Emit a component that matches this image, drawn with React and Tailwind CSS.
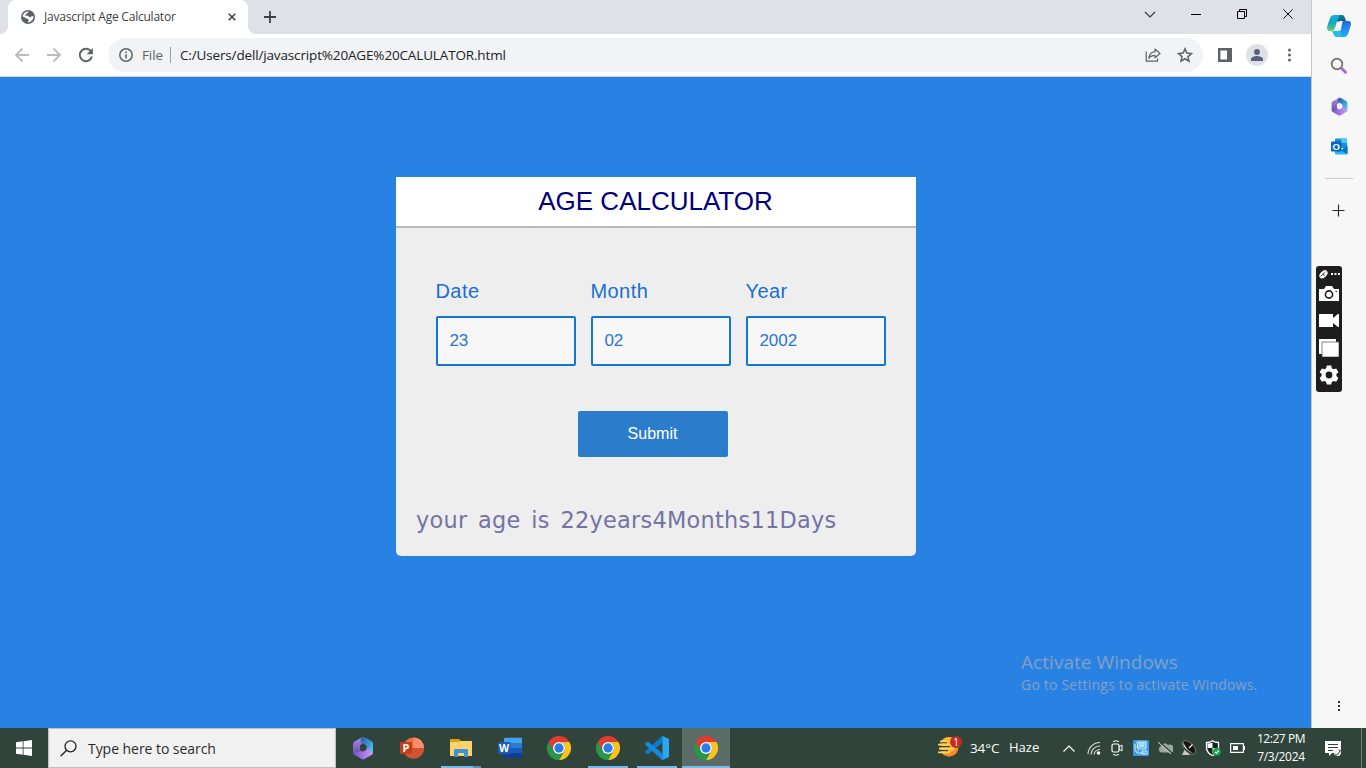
import React from "react";

const segoe = "font-['Open_Sans','Noto_Sans',sans-serif]";
const arial = "font-['Liberation_Sans',Arial,sans-serif]";

function Icon({ size = 16, w, h, box = "0 0 24 24", className = "", children }) {
  return (
    <svg width={w || size} height={h || size} viewBox={box} fill="none" className={"block shrink-0 " + className}>
      {children}
    </svg>
  );
}

/* ---------- browser ---------- */

function TabStrip() {
  return (
    <div className="flex h-[34px] shrink-0 bg-[#dee1e6]">
      <div className="flex w-2 items-end bg-white">
        <div className="h-full w-2 rounded-br-lg bg-[#dee1e6]" />
      </div>
      <div className="w-60 bg-[#dee1e6]">
        <div className="flex h-full items-center rounded-t-lg bg-white pl-[13px] pr-3">
          <Icon size={14} box="0 0 14 14">
            <circle cx="7" cy="7" r="7" fill="#5f6368" />
            <path d="M7.600 1.400c-.2 1-.3 1.300-1.300 1.400-.8.1-.9.900-.6 1.500-.9.2-1.700.5-1.500 1.500h2.600c1 0 .8 1.500 2 1.600 1.100.1.8-1.100 1.900-1.100h1.900C12.300 9.700 10 12.400 6.900 12.500v-1.200c1.200-.2 1.300-1.600.4-2.100-.8-.5-1.700-.2-2.700-1C3.500 7.300 2.400 6.500 1.500 6.600 1.700 3.800 4.300 1.200 7.600 1.400z" fill="#fff" />
          </Icon>
          <span className={segoe + " ml-[9px] flex-1 whitespace-nowrap text-[12px] leading-4 tracking-[-0.22px] text-[#3c4043]"}>
            Javascript Age Calculator
          </span>
          <Icon size={8} box="0 0 9 9">
            <path d="M.8.8l7.400 7.400M8.200.8L.8 8.200" stroke="#3c4043" strokeWidth="1.700" />
          </Icon>
        </div>
      </div>
      <div className="flex w-2 bg-white">
        <div className="h-full w-2 rounded-bl-lg bg-[#dee1e6]" />
      </div>
      <div className="flex flex-1 items-center pl-2">
        <Icon size={12} box="0 0 12 12">
          <path d="M6 0v12M0 6h12" stroke="#3c4043" strokeWidth="1.800" />
        </Icon>
      </div>
      <div className="flex h-7 text-black">
        <div className="flex w-[46px] items-center justify-center">
          <Icon w={12} h={7} box="0 0 12 7"><path d="M1 1l5 5 5-5" stroke="#333" strokeWidth="1.100" /></Icon>
        </div>
        <div className="flex w-[46px] items-center justify-center">
          <div className="h-px w-2.5 bg-black" />
        </div>
        <div className="flex w-[46px] items-center justify-center">
          <Icon size={10} box="0 0 10 10">
            <path d="M.5 2.500h7v7h-7zM2.500 2.500v-2h7v7h-2" stroke="#000" />
          </Icon>
        </div>
        <div className="flex w-[46px] items-center justify-center">
          <Icon size={10} box="0 0 11 11"><path d="M.5.5l10 10M10.500.5l-10 10" stroke="#111" strokeWidth="1.100" /></Icon>
        </div>
      </div>
    </div>
  );
}

function Toolbar() {
  return (
    <div className="flex h-[43px] shrink-0 items-center border-b border-[#d5d8db] bg-white pl-[14px]">
      <Icon size={16} box="0 0 16 16" className="mr-4">
        <path d="M15 8H2M8.500 1.500L2 8l6.500 6.500" stroke="#babcbe" strokeWidth="1.800" />
      </Icon>
      <Icon size={16} box="0 0 16 16" className="mr-4">
        <path d="M1 8h13M7.500 1.500L14 8l-6.500 6.500" stroke="#babcbe" strokeWidth="1.800" />
      </Icon>
      <Icon size={16} box="0 0 16 16">
        <path d="M13.200 4.500A6.200 6.200 0 1 0 14 9.600" stroke="#5f6368" strokeWidth="2" />
        <path d="M14.900 1v6.300H8.600z" fill="#5f6368" />
      </Icon>
      <div className={segoe + " ml-[14px] flex h-[34px] w-[1095px] items-center rounded-full bg-[#f1f3f4] pl-[11px] pr-2.5 leading-5"}>
        <Icon size={14} box="0 0 14 14">
          <circle cx="7" cy="7" r="6.200" stroke="#5f6368" strokeWidth="1.500" />
          <path d="M7 6.200v4.300M7 3.500v1.600" stroke="#5f6368" strokeWidth="1.600" />
        </Icon>
        <span className="ml-[9px] w-[28px] text-[13.5px] tracking-[-0.1px] text-[#5f6368]">File</span>
        <div className="h-4 w-px bg-[#9aa0a6]" />
        <span className="ml-[9px] flex-1 whitespace-nowrap text-[13.5px] tracking-[-0.15px] text-[#202124]">
          C:/Users/dell/javascript%20AGE%20CALULATOR.html
        </span>
        <Icon size={16} box="0 0 16 16" className="mr-4">
          <path d="M1.200 4.500v9.700h11.300v-2.700" stroke="#5f6368" strokeWidth="1.200" />
          <path d="M10 2l5 4.500-5 4.300V8.400C7.400 8.400 5.200 9.200 3.800 11.400 4.200 7.500 6.500 5 10 4.600z" stroke="#5f6368" strokeWidth="1.200" strokeLinejoin="round" />
        </Icon>
        <Icon size={16} box="0 0 24 24">
          <path d="M12 2.800l2.800 6.400 6.900.6-5.200 4.600 1.500 6.800-6-3.600-6 3.600 1.500-6.800-5.200-4.600 6.900-.6z" stroke="#5f6368" strokeWidth="2.300" />
        </Icon>
      </div>
      <Icon size={14} box="0 0 14 14" className="ml-[15px]">
        <path d="M1.200 1.200h11.600v11.600H1.200z" stroke="#5f6368" strokeWidth="2.400" />
        <path d="M9 0h5v14H9z" fill="#5f6368" />
      </Icon>
      <div className="ml-[14px] flex h-[22px] w-[22px] items-center justify-center rounded-full bg-[#dee1e6]">
        <Icon size={12} box="0 0 12 12">
          <circle cx="6" cy="3" r="2.900" fill="#55617a" />
          <path d="M0 12V10c0-2 4-3 6-3s6 1 6 3v2z" fill="#55617a" />
        </Icon>
      </div>
      <Icon w={4} h={14} box="0 0 4 14" className="ml-[19px]">
        <circle cx="2.500" cy="2" r="1.500" fill="#5f6368" />
        <circle cx="2.500" cy="7" r="1.500" fill="#5f6368" />
        <circle cx="2.500" cy="12" r="1.500" fill="#5f6368" />
      </Icon>
    </div>
  );
}

function Field({ label, value }) {
  return (
    <label className="block w-[140px]">
      <span className="ml-[-0.5px] block h-[35px] text-[20px] leading-5 tracking-[0.42px] text-[#1a6fd0]">{label}</span>
      <input
        readOnly
        defaultValue={value}
        className="block h-[50px] w-full rounded-[2px] border-2 border-[#1277d3] bg-[#f7f7f7] pb-0 pl-[11.4px] text-[17px] text-[#2a75cf] outline-none"
      />
    </label>
  );
}

function Page() {
  return (
    <div className={arial + " relative flex flex-1 justify-center bg-[#2882e4] pt-[100px]"}>
      <div className="ml-px h-[379px] w-[520px] overflow-hidden rounded-b-[5px] bg-[#eee]">
        <div className="h-[51px] border-b-2 border-[#b8b8b8] bg-white pr-px text-center text-[26px] leading-[48px] text-[#00007b]">
          AGE CALCULATOR
        </div>
        <div className="flex gap-[15px] pl-10 pt-[53px]">
          <Field label="Date" value="23" />
          <Field label="Month" value="02" />
          <Field label="Year" value="2002" />
        </div>
        <button className="ml-[182px] mt-[45px] block h-[46px] w-[150px] rounded-[2px] bg-[#2b7dcc] pr-px text-[16px] text-white">
          Submit
        </button>
        <p className="ml-5 mt-[47px] whitespace-nowrap font-['DejaVu_Sans',Verdana,sans-serif] text-[22.4px] leading-8 tracking-[0.27px] text-[#7373a5] [word-spacing:3.3px]">
          your age is 22years4Months11Days
        </p>
      </div>
      <div className={segoe + " absolute bottom-[33px] left-[1021px] whitespace-nowrap text-[#84a0c4]"}>
        <div className="text-[19px] leading-6 tracking-[0.05px]">Activate Windows</div>
        <div className="text-[14px] leading-[21px] tracking-[0.2px]">Go to Settings to activate Windows.</div>
      </div>
    </div>
  );
}

/* ---------- side bar ---------- */

function M365({ size }) {
  return (
    <Icon size={size} box="0 0 24 24">
      <defs>
        <linearGradient id="m1" x1="0" y1="0" x2="0" y2="1"><stop stopColor="#b58af0" /><stop offset="1" stopColor="#5c49a8" /></linearGradient>
        <linearGradient id="m2" x1="0" y1="0" x2="1" y2="1"><stop stopColor="#2754a8" /><stop offset="1" stopColor="#54d0f5" /></linearGradient>
        <linearGradient id="m3" x1="0" y1="0" x2="1" y2="0"><stop stopColor="#7250c8" /><stop offset="1" stopColor="#d59af5" /></linearGradient>
      </defs>
      <path d="M12 .8L3.500 5.500Q2 6.300 2 8v9l7 3 3-3-3-3V9.500L12 7z" fill="url(#m1)" />
      <path d="M10 2L11 1.300q1.500-.8 3 0l6.500 3.800q1.500.8 1.500 2.500v9.500l-6.500-3.100V9.500L9.500 6z" fill="url(#m2)" />
      <path d="M2 17l8-2 5.500-3 6.500 5q0 1-1.500 2l-7 4.100q-1.500.8-3 0L3.500 18.800Q2.200 18 2 17z" fill="url(#m3)" />
      <path d="M9 9.800l3.700-2 2.800 2.400v3.600l-3.900 2-2.600-2z" fill={size > 20 ? "#30443c" : "#f7f7f7"} />
    </Icon>
  );
}

function Copilot() {
  return (
    <Icon size={24} box="0 0 24 24">
      <defs>
        <linearGradient id="c1" x1="0" y1="0" x2="0" y2="1"><stop stopColor="#12aee5" /><stop offset=".5" stopColor="#16a6bd" /><stop offset="1" stopColor="#63d17e" /></linearGradient>
        <linearGradient id="c2" x1="0" y1="0" x2="0" y2="1"><stop stopColor="#2466df" /><stop offset="1" stopColor="#20b1f5" /></linearGradient>
        <linearGradient id="c3" x1="0" y1="0" x2="1" y2="1"><stop stopColor="#0799c5" /><stop offset="1" stopColor="#0a5770" /></linearGradient>
      </defs>
      <path d="M6 1h9q2 0 2.600 2L19 7h-5l-3 1z" fill="url(#c3)" />
      <path d="M8 1h5q-1 0-2 3L8 14q-.8 3-3 3H2.500Q-.5 17 .3 12L3 4q1-3 5-3z" fill="url(#c1)" />
      <path d="M5 17h5l4-1-1 4q-.5 2-2 3H9.500Q7.500 23 7 21z" fill="#1ebcef" />
      <path d="M16 7h5.500q3 0 2.300 4L21 20q-1 3-4 3h-6q1 0 2-3l2-10q.5-3 1-3z" fill="url(#c2)" />
      <path d="M11.500 8q1-1 4-1-1 1-1.500 3l-1.500 6Q12 17 8 17q.8-1 1.200-2.500z" fill="#f7f7f7" />
    </Icon>
  );
}

function Recorder() {
  return (
    <div className="ml-1 mt-[49px] flex h-[126px] w-[26px] flex-col items-center self-start rounded-[3px] bg-[#1d1d1d] pt-1">
      <Icon w={22} h={9} box="0 0 22 9">
        <ellipse cx="5.500" cy="4.300" rx="4.800" ry="3.100" transform="rotate(-45 5.500 4.300)" fill="#fff" />
        <path d="M2.500 6.500l5-4.500M5 3.500l1.500 2.500" stroke="#1d1d1d" strokeWidth=".8" />
        <path d="M13 4h2M16.500 4h2M20 4h2" stroke="#fff" strokeWidth="2" />
      </Icon>
      <Icon w={20} h={16} box="0 0 20 16" className="mt-[7px]">
        <path d="M0 3h5l2-3h6l2 3h5v12H0z" fill="#fff" />
        <circle cx="10" cy="8.500" r="3.600" stroke="#1d1d1d" strokeWidth="1.600" />
        <path d="M16.500 5.500h1.500" stroke="#1d1d1d" />
      </Icon>
      <Icon w={20} h={14} box="0 0 20 14" className="mt-[12px]">
        <path d="M0 0h14v4l5-4h1v13h-1l-5-4v4H0z" fill="#fff" />
      </Icon>
      <Icon w={20} h={18} box="0 0 20 18" className="mt-[11px]">
        <path d="M0 0h17v15H0z" fill="#fff" />
        <path d="M3 3h17v15H3z" fill="#fff" stroke="#666" strokeWidth=".8" />
        <path d="M0 15h2.500v3H0z" fill="#1d1d1d" />
      </Icon>
      <Icon size={20} box="0 0 20 20" className="mt-2">
        <path d="M7.800.5h4.400l.6 2.700 1.700 1L17.200 3.400l2.200 3.800-2 1.900v1.900l2 1.900-2.200 3.800-2.700-.8-1.700 1-.6 2.700H7.800l-.6-2.700-1.700-1-2.700.8-2.200-3.800 2-1.900V9.100l-2-1.900 2.200-3.800 2.700.8 1.700-1z" fill="#fff" />
        <circle cx="10" cy="10" r="3.400" fill="#1d1d1d" />
      </Icon>
    </div>
  );
}

function SideBar() {
  return (
    <div className="flex w-[55px] shrink-0 flex-col items-center border-l border-[#c4c6c9] bg-[#f7f7f7]">
      <div className="flex h-[46px] items-end pb-2 pr-px"><Copilot /></div>
      <div className="flex h-10 items-center pr-px">
        <Icon size={18} box="0 0 18 18">
          <path d="M11 11l2 2" stroke="#777" strokeWidth="1.800" />
          <path d="M12.500 12.200l3 3" stroke="#a36ad6" strokeWidth="3" strokeLinecap="round" />
          <circle cx="7" cy="7" r="5.300" stroke="#7b7b7b" strokeWidth="1.900" />
        </Icon>
      </div>
      <div className="flex h-10 items-center pl-px pt-px"><M365 size={19} /></div>
      <div className="flex h-10 items-center pl-px pt-px">
        <Icon w={17} h={17} box="0 0 17 17">
          <path d="M5 .5h10q1 0 1 1V10H4V1.500q0-1 1-1z" fill="#1390df" />
          <path d="M10 .5h5q1 0 1 1V5h-6z" fill="#50c8f5" />
          <path d="M4 9l6 3 6.500-4.500V15.500q0 1-1 1H5q-1 0-1-1z" fill="#28b6f0" />
          <path d="M16.500 7.500L10 12.500l6.500 3.500z" fill="#1470bd" />
          <rect x="0" y="3.500" width="10.500" height="10" rx="1" fill="#0869b9" />
          <text x="5.250" y="12" textAnchor="middle" fontSize="9.500" fontWeight="700" fontFamily="Liberation Sans, sans-serif" fill="#fff">O</text>
        </Icon>
      </div>
      <div className="mt-3 h-px w-7 bg-[#c9c9c9]" />
      <Icon size={13} box="0 0 13 13" className="mr-px mt-[25px]">
        <path d="M6.500.5v12M.5 6.500h12" stroke="#222" strokeWidth="1.100" />
      </Icon>
      <Recorder />
      <div className="mb-[17px] mt-auto flex flex-col gap-[2px]">
        <div className="h-[2px] w-[2px] bg-[#333]" />
        <div className="h-[2px] w-[2px] bg-[#333]" />
        <div className="h-[2px] w-[2px] bg-[#333]" />
      </div>
    </div>
  );
}

/* ---------- task bar ---------- */

function Chrome() {
  return (
    <Icon size={24} box="0 0 48 48">
      <path d="M3.200 12A24 24 0 0 1 44.800 12L24 12A12 12 0 0 0 13.600 30z" fill="#e33b2e" />
      <path d="M44.800 12A24 24 0 0 1 24 48L34.400 30A12 12 0 0 0 24 12z" fill="#fcc31e" />
      <path d="M24 48A24 24 0 0 1 3.200 12L13.600 30A12 12 0 0 0 34.400 30z" fill="#279847" />
      <circle cx="24" cy="24" r="12" fill="#fff" />
      <circle cx="24" cy="24" r="9.300" fill="#2a7de9" />
    </Icon>
  );
}

function PowerPoint() {
  return (
    <Icon w={24} h={22} box="0 0 24 22">
      <circle cx="13.500" cy="11" r="10.500" fill="#ed6c47" />
      <path d="M13.500.5A10.500 10.500 0 0 1 24 11H13.500z" fill="#ff8f6b" />
      <path d="M24 11A10.500 10.500 0 0 1 3 11z" fill="#d35230" />
      <rect x="0" y="5" width="12" height="12" rx="1" fill="#c43e1c" />
      <text x="6" y="15" textAnchor="middle" fontSize="11" fontWeight="700" fontFamily="Open Sans, sans-serif" fill="#fff">P</text>
    </Icon>
  );
}

function Explorer() {
  return (
    <Icon w={22} h={20} box="0 0 22 20">
      <path d="M0 1h9l2 2h10v4H0z" fill="#e0a106" />
      <path d="M0 4h9l2-1h11v15H0z" fill="#fdd469" />
      <path d="M4 19v-7q0-1 1-1h12q1 0 1 1v7h-4v-4H8v4z" fill="#3b94d9" />
    </Icon>
  );
}

function Word() {
  return (
    <Icon w={24} h={22} box="0 0 24 22">
      <path d="M6 1.500q0-.7 1-.7h16q1 0 1 .7V6H6z" fill="#41a5ee" />
      <path d="M6 6h18v5H6z" fill="#2b7cd3" />
      <path d="M6 11h18v5H6z" fill="#185abd" />
      <path d="M6 16h18v4.500q0 .7-1 .7H7q-1 0-1-.7z" fill="#103f91" />
      <rect x="0" y="5" width="12.500" height="12" rx="1" fill="#185abd" />
      <text x="6.200" y="14.800" textAnchor="middle" fontSize="10.500" fontWeight="700" fontFamily="Open Sans, sans-serif" fill="#fff">W</text>
    </Icon>
  );
}

function VSCode() {
  return (
    <Icon size={24} box="0 0 24 24">
      <path d="M17.500 6.500L3 18.500 0 16.500v-1L17 0l1 .2z" fill="#0a7ccc" />
      <path d="M17.500 17.500L3 5.500 0 7.500v1L17 24l1-.2z" fill="#1689d8" />
      <path d="M17.500 0L24 3v18l-6.500 3z" fill="#29a7f2" />
    </Icon>
  );
}

function Slot({ children, line = "", active = false }) {
  return (
    <div className="flex h-10 w-[49px] shrink-0 flex-col items-center">
      <div className={"flex h-[38px] w-12 items-center justify-center pt-0.5 " + (active ? "bg-[#5b6b65]" : "")}>{children}</div>
      <div className={"h-0.5 " + line} />
    </div>
  );
}

function Tray() {
  return (
    <div className="flex items-center">
      <Icon w={24} h={22} box="0 0 24 22" className="mb-0.5">
        <path d="M2.500 7q2-5.500 8-6 9 0 10 9 0 9-9 10.500-7-.3-9-6z" fill="#fdb92e" />
        <path d="M20.500 10q0 9-9 10.500-4-.2-6.500-2.500 10 0 13-8z" fill="#f58b25" />
        <path d="M0 6.700h9M0 10.700h12M0 14.700h10" stroke="#30443c" strokeWidth="1.200" />
        <path d="M2 5.300h10M0 8.700h14M1 12.700h16M0 16.400h12" stroke="#fdd05c" strokeWidth="1.800" />
        <circle cx="18" cy="6" r="6" fill="#c62b23" />
        <text x="18" y="9.500" textAnchor="middle" fontSize="10" fontFamily="Open Sans, sans-serif" fill="#fff">1</text>
      </Icon>
      <span className="ml-[8px] w-[39px] text-[13.5px] tracking-[-0.1px]">34°C</span>
      <span className="w-[54px] text-[13px]">Haze</span>
      <Icon w={12} h={7} box="0 0 12 7"><path d="M.5 6.500L6 1l5.500 5.500" stroke="#fff" strokeWidth="1.200" /></Icon>
      <Icon size={14} box="0 0 14 14" className="ml-3">
        <path d="M1 13A12 12 0 0 1 13 1.500M4 13.500a9 9 0 0 1 9-8.500M7 13.500A6 6 0 0 1 13 8.500" stroke="#dce3e0" strokeWidth="1.100" />
        <circle cx="11.500" cy="12" r="1.800" fill="#fff" />
      </Icon>
      <Icon w={12} h={16} box="0 0 12 16" className="ml-[10px]">
        <rect x="1" y="4" width="7" height="8" rx="1.500" stroke="#fff" strokeWidth="1.200" />
        <path d="M8 7l3-2v6l-3-2M2 1.500q3-1.500 6 0M2 14.500q3 1.500 6 0" stroke="#fff" />
      </Icon>
      <Icon size={16} box="0 0 16 16" className="ml-[10px]">
        <rect width="16" height="16" rx="1.500" fill="#3a9ce3" />
        <path d="M5 2h8v6H5z" fill="#7cc4f2" />
        <path d="M4 2h9v7H5zM6 4h5M6 6h5M2 4v6q1 4 6 3h4M9 11h5v3H9z" stroke="#e8f5ff" strokeWidth=".9" />
        <path d="M2 7h2M3 11h3" stroke="#e6c48c" strokeWidth="1.200" />
      </Icon>
      <Icon w={16} h={12} box="0 0 16 12" className="ml-2">
        <path d="M4 10.500a3.500 3.500 0 0 1 0-6.500 4 4 0 0 1 7-1 4 4 0 0 1 4 7.500z" fill="#9aa6a1" />
        <path d="M2.500 0l13 11.500" stroke="#30443c" strokeWidth="1.400" /><path d="M1 0l13 12" stroke="#dce3e0" />
      </Icon>
      <Icon size={16} box="0 0 16 16" className="ml-2">
        <path d="M4 9l-3 6h7l2-3z" fill="#c8c8c8" />
        <ellipse cx="7.800" cy="7.500" rx="8.500" ry="4.600" transform="rotate(45 7.800 7.500)" fill="#151515" stroke="#999" strokeWidth=".6" />
        <path d="M1.500 1.500Q2 11 14 14 7 11 5.500 8z" fill="#d8d8d8" />
        <path d="M8 8l3.500-3.500" stroke="#eee" strokeWidth="1.200" />
      </Icon>
      <Icon size={16} box="0 0 16 16" className="ml-2">
        <path d="M7.500.7q3 2 6 1.800v6q-1 5-6 7-5-2-6-7v-6q3 .2 6-1.800z" fill="#17231e" stroke="#fff" strokeWidth="1.300" />
        <path d="M7.500 2.500v5.500H2.500V3.500q3 0 5-1zM7.500 8h5q-1 4-5 5.500z" fill="#fff" />
        <circle cx="11.800" cy="11.800" r="4" fill="#16a356" />
        <path d="M9.800 11.800l1.500 1.500 2.500-2.700" stroke="#fff" strokeWidth="1.100" />
      </Icon>
      <Icon w={15} h={10} box="0 0 15 10" className="ml-[9px]">
        <path d="M.6.6h12.800v8.800H.6zM14.500 3v4" stroke="#fff" strokeWidth="1.200" />
        <path d="M3 3h5v4H3z" fill="#fff" />
      </Icon>
      <div className="ml-[8px] flex w-[56px] flex-col items-center whitespace-nowrap text-[12px] leading-[18px] tracking-[-0.45px]">
        <span>12:27 PM</span>
        <span className="tracking-[-0.3px]">7/3/2024</span>
      </div>
      <Icon w={17} h={17} box="0 0 17 17" className="ml-4">
        <path d="M0 1h16v9l-3-1-4 4H7l-3 3v-3H0z" fill="#fff" />
        <path d="M3 4.500h10M3 7.500h10M3 10.500h5" stroke="#30443c" />
        <circle cx="12.500" cy="12.500" r="3.500" fill="#f0f0f0" /><path d="M10 15q4 0 5-5" stroke="#30443c" />
      </Icon>
      <div className="ml-[19px] h-10 w-px bg-[#75827c]" />
      <div className="w-1" />
    </div>
  );
}

function TaskBar() {
  return (
    <div className={segoe + " flex h-10 shrink-0 bg-[#30443c] text-white"}>
      <div className="flex w-12 items-center justify-center">
        <Icon size={16} box="0 0 16 16">
          <path d="M0 2.300l6.700-1v6.200H0zM7.500 1.200L16 0v7.500H7.500zM0 8.400h6.700v6.300L0 13.800zM7.500 8.400H16V16l-8.500-1.200z" fill="#fff" />
        </Icon>
      </div>
      <div className="flex w-72 items-center border border-[#bfc2c0] bg-[#f1f1f1] pl-[11px]">
        <Icon size={17} box="0 0 17 17">
          <circle cx="10.500" cy="6.300" r="5.500" stroke="#222" strokeWidth="1.300" />
          <path d="M6.600 10.200L.6 16.200" stroke="#222" strokeWidth="1.300" />
        </Icon>
        <span className="ml-[11px] whitespace-nowrap text-[14px] tracking-[-0.05px] text-[#2b2b2b]">Type here to search</span>
      </div>
      <div className="ml-[2px] flex flex-1">
        <Slot><M365 size={24} /></Slot>
        <Slot><PowerPoint /></Slot>
        <Slot line="w-10 border-r-8 border-[#5e8fb3] bg-[#76b9ed]"><Explorer /></Slot>
        <Slot><Word /></Slot>
        <Slot><Chrome /></Slot>
        <Slot line="w-10 bg-[#76b9ed]"><Chrome /></Slot>
        <Slot line="w-10 bg-[#76b9ed]"><VSCode /></Slot>
        <Slot active line="w-12 bg-[#76b9ed]"><Chrome /></Slot>
      </div>
      <Tray />
    </div>
  );
}

export default function App() {
  return (
    <div className="flex h-screen w-full flex-col overflow-hidden">
      <div className="flex min-h-0 flex-1">
        <div className="flex min-w-0 flex-1 flex-col">
          <TabStrip />
          <Toolbar />
          <Page />
        </div>
        <SideBar />
      </div>
      <TaskBar />
    </div>
  );
}
